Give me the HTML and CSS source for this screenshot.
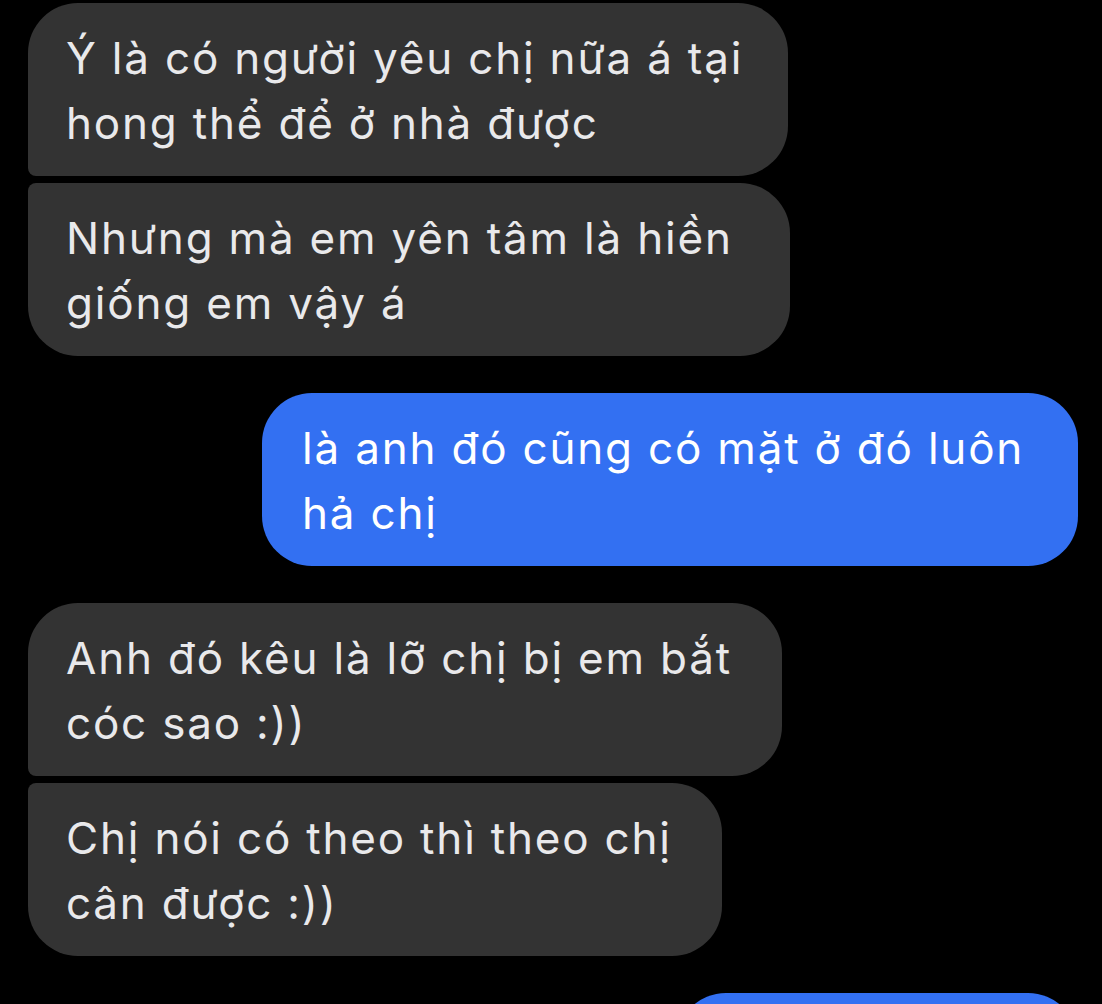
FILE: index.html
```html
<!DOCTYPE html>
<html lang="vi">
<head>
<meta charset="utf-8">
<title>Tin nhắn</title>
<link rel="stylesheet" href="styles.css">
</head>
<body>
<main class="thread">
  <div class="bubble in first w1">Ý là có người yêu chị nữa á tại<br>hong thể để ở nhà được</div>
  <div class="bubble in last w2">Nhưng mà em yên tâm là hiền<br>giống em vậy á</div>
  <div class="bubble out w3">là anh đó cũng có mặt ở đó luôn<br>hả chị</div>
  <div class="bubble in first w4">Anh đó kêu là lỡ chị bị em bắt<br>cóc sao :))</div>
  <div class="bubble in last w5">Chị nói có theo thì theo chị<br>cân được :))</div>
  <div class="bubble out w6">&nbsp;<br>&nbsp;</div>
</main>
</body>
</html>
```
FILE: styles.css
```css
html, body {
  margin: 0;
  padding: 0;
  background: #000;
  height: 1004px;
  overflow: hidden;
}
.thread {
  display: flex;
  flex-direction: column;
  padding-top: 3px;
  font-family: "Inter", "Noto Sans", sans-serif;
  font-size: 44px;
  line-height: 65px;
  letter-spacing: 1.8px;
}
.bubble {
  box-sizing: border-box;
  height: 173px;
  padding: 23px 30px 0 38px;
  border-radius: 50px;
  flex: none;
  white-space: nowrap;
}
.in {
  align-self: flex-start;
  margin-left: 28px;
  background: #333333;
  color: #e9e9eb;
}
.in.first {
  border-bottom-left-radius: 8px;
  margin-top: 37px;
}
.thread .in.first:first-child { margin-top: 0; }
.in.last {
  border-top-left-radius: 8px;
  margin-top: 7px;
}
.out {
  align-self: flex-end;
  margin-right: 24px;
  margin-top: 37px;
  background: #3370f2;
  color: #ffffff;
  padding-left: 40px;
}
.w1 { width: 760px; }
.w2 { width: 762px; }
.w3 { width: 816px; }
.w4 { width: 754px; }
.w5 { width: 694px; }
.w6 { width: 402px; }
```
